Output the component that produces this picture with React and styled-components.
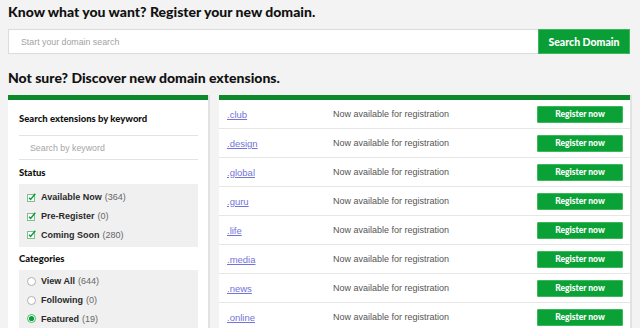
import React from 'react';
import styled, { createGlobalStyle } from 'styled-components';

const GlobalStyle = createGlobalStyle`
  html, body {
    margin: 0;
    padding: 0;
    background: #f3f3f3;
  }
  body {
    font-family: "Liberation Sans", Arial, sans-serif;
    overflow: hidden;
  }
`

const Page = styled.div`
  width: 640px;
  height: 328px;
  box-sizing: border-box;
  padding: 0 10px 0 8px;
  overflow: hidden;
`

const Heading = styled.h1`
  margin: 0;
  font-family: Lato, "Noto Sans", sans-serif;
  font-weight: 900;
  font-size: 14px;
  line-height: 24px;
  color: #111;
  margin-top: ${p => p.$top || 0}px;
`

const SearchRow = styled.div`
  display: flex;
  height: 25px;
  margin-top: 5px;
`

const SearchInput = styled.input`
  flex: 1;
  min-width: 0;
  box-sizing: border-box;
  border: 1px solid #dcdcdc;
  border-right: none;
  background: #fff;
  padding: 0 12px;
  font-family: "Liberation Sans", Arial, sans-serif;
  font-size: 8.8px;
  outline: none;
  &::placeholder { color: #a3a3a3; }
`

const SearchButton = styled.button`
  width: 92px;
  box-sizing: border-box;
  border: 1px solid #3cb85a;
  background: #0a9e36;
  color: #fff;
  font-family: Lato, "Noto Sans", sans-serif;
  font-weight: 900;
  font-size: 10.5px;
  padding: 0;
`

const Columns = styled.div`
  display: flex;
  gap: 11px;
  margin-top: 5px;
  align-items: flex-start;
`

const Panel = styled.div`
  background: #fff;
  border-top: 5px solid #0c8a2b;
  box-shadow: 2px 0 0 #e2e2e2;
  height: 260px;
  box-sizing: border-box;
`

const Sidebar = styled(Panel)`
  width: 200px;
  padding: 0 10px 0 11px;
`

const Results = styled(Panel)`
  flex: 1;
`

const SideTitle = styled.div`
  font-family: Lato, "Noto Sans", sans-serif;
  font-weight: 900;
  font-size: 9.5px;
  color: #111;
  line-height: 14px;
  padding: ${p => p.$pad || '0'};
`

const KeywordBox = styled.div`
  border-top: 1px solid #e3e3e3;
  border-bottom: 1px solid #e3e3e3;
  height: 23px;
  display: flex;
  align-items: center;
  padding-left: 11px;
  font-size: 8.8px;
  color: #a5a5a5;
  margin-top: 9px;
`

const OptionBox = styled.div`
  background: #f0f0f0;
  padding: ${p => p.$pad || '4px 0 3px'};
  margin-top: 4px;
`

const Option = styled.div`
  display: flex;
  align-items: center;
  height: 18.7px;
  padding-left: 8px;
  font-size: 9px;
  color: #222;
`

const OptionIcon = styled.span`
  width: 14px;
  display: flex;
  align-items: center;
`

const OptionLabel = styled.span`
  font-weight: bold;
  color: #2a2a2a;
`

const Count = styled.span`
  color: #666;
  margin-left: 3px;
`

const Row = styled.div`
  display: flex;
  align-items: center;
  height: 28px;
  border-bottom: 1px solid #e6e6e6;
  padding: 0 7px 0 8px;
`

const DomainLink = styled.a`
  width: 106px;
  font-size: 9.5px;
  color: #7373d8;
  text-decoration: underline;
`

const StatusText = styled.span`
  flex: 1;
  font-size: 9px;
  color: #555;
`

const RegisterButton = styled.button`
  width: 86px;
  height: 17px;
  box-sizing: border-box;
  border: 1px solid #3cb85a;
  border-radius: 1px;
  background: #0aa136;
  color: #fff;
  font-family: Lato, "Noto Sans", sans-serif;
  font-weight: 900;
  font-size: 8.5px;
  padding: 0;
`

const CheckIcon = () => (
  <svg width="9" height="9" viewBox="0 0 9 9">
    <rect x="0.5" y="1.5" width="7" height="7" fill="#fff" stroke="#7fbf8e" strokeWidth="1" />
    <path d="M2 4.8 L3.6 6.4 L8.3 0.8" fill="none" stroke="#0a9e36" strokeWidth="1.4" />
  </svg>
)

const RadioIcon = ({ checked }) => (
  <svg width="9" height="9" viewBox="0 0 9 9">
    <circle cx="4.5" cy="4.5" r="4" fill="#fff" stroke={checked ? '#33b35a' : '#a8a8a8'} strokeWidth="0.9" />
    {checked && <circle cx="4.5" cy="4.5" r="2.6" fill="#0a9e36" />}
  </svg>
)

const statuses = [
  ['Available Now', 364],
  ['Pre-Register', 0],
  ['Coming Soon', 280],
]

const categories = [
  ['View All', 644, false],
  ['Following', 0, false],
  ['Featured', 19, true],
]

const domains = ['.club', '.design', '.global', '.guru', '.life', '.media', '.news', '.online']

export default function App() {
  return (
    <Page>
      <GlobalStyle />
      <Heading>Know what you want? Register your new domain.</Heading>
      <SearchRow>
        <SearchInput placeholder="Start your domain search" />
        <SearchButton>Search Domain</SearchButton>
      </SearchRow>
      <Heading $top={12}>Not sure? Discover new domain extensions.</Heading>
      <Columns>
        <Sidebar>
          <SideTitle $pad="12px 0 0">Search extensions by keyword</SideTitle>
          <KeywordBox>Search by keyword</KeywordBox>
          <SideTitle $pad="6px 0 0">Status</SideTitle>
          <OptionBox>
            {statuses.map(([label, n]) => (
              <Option key={label}>
                <OptionIcon><CheckIcon /></OptionIcon>
                <OptionLabel>{label}</OptionLabel>
                <Count>({n})</Count>
              </Option>
            ))}
          </OptionBox>
          <SideTitle $pad="5px 0 0">Categories</SideTitle>
          <OptionBox $pad="2px 0 3px">
            {categories.map(([label, n, checked]) => (
              <Option key={label}>
                <OptionIcon><RadioIcon checked={checked} /></OptionIcon>
                <OptionLabel>{label}</OptionLabel>
                <Count>({n})</Count>
              </Option>
            ))}
          </OptionBox>
        </Sidebar>
        <Results>
          {domains.map(d => (
            <Row key={d}>
              <DomainLink href="#">{d}</DomainLink>
              <StatusText>Now available for registration</StatusText>
              <RegisterButton>Register now</RegisterButton>
            </Row>
          ))}
        </Results>
      </Columns>
    </Page>
  )
}
